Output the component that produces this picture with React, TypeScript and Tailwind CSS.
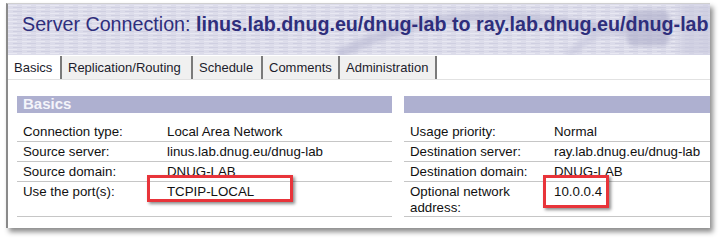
const tabs = [
  { label: "Basics", w: "w-[54px]", active: true },
  { label: "Replication/Routing", w: "w-[131px]" },
  { label: "Schedule", w: "w-[70px]" },
  { label: "Comments", w: "w-[77px]" },
  { label: "Administration", w: "w-[97px]" },
];

const leftRows = [
  ["Connection type:", "Local Area Network"],
  ["Source server:", "linus.lab.dnug.eu/dnug-lab"],
  ["Source domain:", "DNUG-LAB"],
];

const rightRows = [
  ["Usage priority:", "Normal"],
  ["Destination server:", "ray.lab.dnug.eu/dnug-lab"],
  ["Destination domain:", "DNUG-LAB"],
];

function Row({ label, value }: { label: string; value: string }) {
  return (
    <div className="flex h-[20px] items-center border-b border-[#c6c6c6]">
      <div className="w-[150px] shrink-0 pl-[6px]">{label}</div>
      <div>{value}</div>
    </div>
  );
}

function Highlight({ className }: { className: string }) {
  return (
    <div
      className={`absolute border-[3px] border-[#e8343a] shadow-[2px_2px_3px_rgba(0,0,0,0.45)] ${className}`}
    />
  );
}

function HeaderArt() {
  return (
    <svg className="absolute inset-0 h-full w-full" viewBox="0 0 702 51" preserveAspectRatio="none">
      <defs>
        <filter id="soft">
          <feGaussianBlur stdDeviation="2.2" />
        </filter>
        <pattern id="streaks" width="14" height="4" patternUnits="userSpaceOnUse">
          <rect width="14" height="4" fill="#dcdcea" />
          <rect y="1" width="9" height="1" fill="#e8e8f2" />
          <rect x="5" y="3" width="9" height="1" fill="#cfcfe1" />
        </pattern>
      </defs>
      <rect width="702" height="51" fill="url(#streaks)" />
      <g filter="url(#soft)" opacity="0.55">
        <path d="M330 51 C 390 20, 440 8, 520 14 S 610 40, 650 10" stroke="#b6b6d0" strokeWidth="10" fill="none" />
        <path d="M560 51 C 585 30, 600 20, 640 24" stroke="#c4c4da" strokeWidth="8" fill="none" />
        <rect x="618" y="6" width="44" height="36" rx="8" fill="#a9a9c6" />
        <rect x="672" y="0" width="40" height="51" fill="#c7c7dc" />
      </g>
    </svg>
  );
}

export default function App() {
  return (
    <div className="h-[238px] w-[719px] bg-white pt-[3px] pl-[6px] font-['Liberation_Sans',Arial,sans-serif] text-[13.3px] text-[#111]">
      <div className="flex h-[225px] w-[704px] flex-col border-t border-l-2 border-t-[#d0d0d0] border-l-[#8a8a8a] bg-white shadow-[3px_4px_5px_rgba(0,0,0,0.45)]">
        <div className="relative h-[51px] shrink-0 overflow-hidden">
          <HeaderArt />
          <div className="relative whitespace-nowrap pt-[6px] pl-[14px] text-[19.7px] leading-[28px] text-[#2e2e7c]">
            Server Connection: <span className="font-bold">linus.lab.dnug.eu/dnug-lab to ray.lab.dnug.eu/dnug-lab</span>
          </div>
        </div>

        <div className="mt-[1px] flex h-[24px] shrink-0 border-b border-[#e2e2e2] text-[13px]">
          {tabs.map((t) => (
            <div
              key={t.label}
              className={`flex items-center border-r-2 border-r-[#7a7a7a] pl-[6px] text-[#1c1c2c] ${t.w} ${
                t.active ? "bg-white" : "bg-[#f0f0f0]"
              }`}
            >
              {t.label}
            </div>
          ))}
        </div>

        <div className="mt-[16px] flex gap-[12px] pl-[9px]">
          <div className="w-[375px] shrink-0">
            <div className="flex h-[17px] items-center bg-[#aeb0d0] pl-[6px] text-[15px] font-bold text-[#f4f4fa]">Basics</div>
            <div className="mt-[9px]">
              {leftRows.map(([l, v]) => (
                <Row key={l} label={l} value={v} />
              ))}
              <div className="flex h-[35px] border-b border-[#c6c6c6] pt-[2px] leading-[16px]">
                <div className="w-[150px] shrink-0 pl-[6px]">Use the port(s):</div>
                <div className="relative">
                  TCPIP-LOCAL
                  <Highlight className="top-[-9px] left-[-20px] h-[27px] w-[146px]" />
                </div>
              </div>
            </div>
          </div>

          <div className="flex-1">
            <div className="h-[17px] bg-[#aeb0d0]" />
            <div className="mt-[9px]">
              {rightRows.map(([l, v]) => (
                <Row key={l} label={l} value={v} />
              ))}
              <div className="flex h-[35px] border-b border-[#c6c6c6] pt-[2px] leading-[16px]">
                <div className="w-[150px] shrink-0 pl-[6px]">
                  Optional network
                  <br />
                  address:
                </div>
                <div className="relative">
                  10.0.0.4
                  <Highlight className="top-[-9px] left-[-11px] h-[33px] w-[66px]" />
                </div>
              </div>
            </div>
          </div>
        </div>
      </div>
    </div>
  );
}
